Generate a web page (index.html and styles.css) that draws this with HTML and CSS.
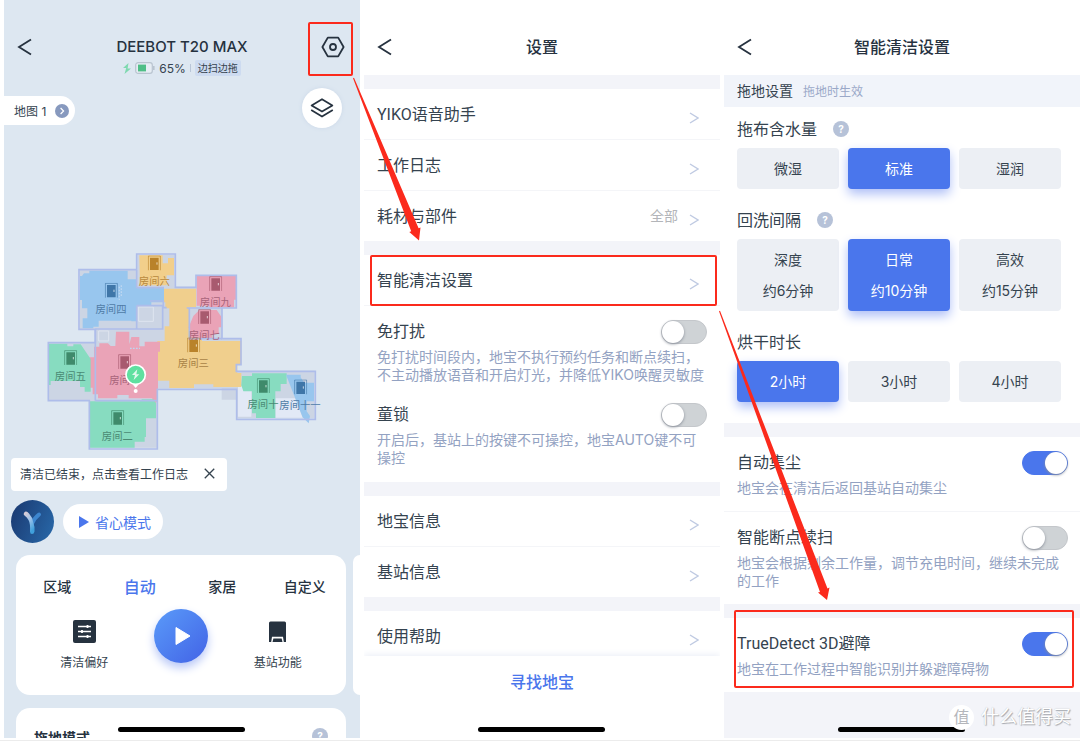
FILE: index.html
```html
<!DOCTYPE html>
<html lang="zh-CN">
<head>
<meta charset="utf-8">
<meta name="viewport" content="width=device-width, initial-scale=1">
<title>DEEBOT T20 MAX</title>
<link rel="stylesheet" href="styles.css">
</head>
<body>
<svg class="defs" aria-hidden="true">
  <symbol id="back" viewBox="0 0 16 18"><path d="M14 1.5 2 9l12 7.5" fill="none" stroke="currentColor" stroke-width="1.8"/></symbol>
  <symbol id="chevron" viewBox="0 0 10 12"><path d="M1 1l8 5-8 5" fill="none" stroke="currentColor" stroke-width="1.4"/></symbol>
  <symbol id="door" viewBox="0 0 40 46"><path d="M2 45V2h36v43" fill="none" stroke="currentColor" stroke-width="3" opacity=".65"/><path d="M7 7h26v37H7z" fill="currentColor"/><path d="M28 21v7" stroke="#fff" stroke-width="3" opacity=".7"/></symbol>
</svg>
<div class="stage">

  <section class="panel home">
    <header class="header">
      <button class="icon-btn" aria-label="返回"><svg class="back"><use href="#back"/></svg></button>
      <h1 class="title">DEEBOT T20 MAX</h1>
      <button class="icon-btn gear marked" aria-label="设置">
        <svg class="gear-icon" viewBox="0 0 24 22" fill="none" stroke="currentColor" stroke-width="1.8" stroke-linejoin="round"><path d="M6.8 1.6h10.4L22.6 11l-5.4 9.4H6.8L1.4 11z"/><circle cx="12" cy="11" r="3"/></svg>
      </button>
    </header>
    <div class="status">
      <svg class="bolt" viewBox="0 0 8 11"><path d="M5.5 0 0 5h3.2L1.5 11 8 5.4H4.6z" fill="#7fd9b0"/></svg>
      <svg class="battery" viewBox="0 0 20 12"><rect x=".7" y=".7" width="16.6" height="10.6" rx="2.4" fill="#e6edf4" stroke="#b9c4d0" stroke-width="1.2"/><rect x="3" y="2.6" width="8" height="6.8" fill="#4fbe87"/><path d="M18.8 4v4" stroke="#b9c4d0" stroke-width="1.6"/></svg>
      <span class="percent">65%</span>
      <i class="sep"></i>
      <span class="mode-tag">边扫边拖</span>
    </div>
    <div class="map-tools">
      <button class="map-chip">地图 1
        <svg class="chip-arrow" viewBox="0 0 14 14"><circle cx="7" cy="7" r="7" fill="#8799be"/><path d="M5.6 4 8.6 7l-3 3" fill="none" stroke="#fff" stroke-width="1.2"/></svg>
      </button>
      <button class="layers" aria-label="图层">
        <svg class="layers-icon" viewBox="0 0 24 20" fill="none" stroke="currentColor" stroke-width="1.7" stroke-linejoin="round"><path d="M12 1.2 22.4 7.400 12 13.600 1.600 7.400z"/><path d="M1.200 12 12 18.600 22.800 12"/></svg>
      </button>
    </div>
    <svg class="map" viewBox="4 128 356 330" role="img" aria-label="房间地图">
      <g transform="translate(30 240) scale(.33333)">
        <g fill="#ccd5e4">
          <path d="M150 90h172v-46h112v96h66v-33h118v96h-42v93h56v76h-14v20h236v142H620v-55h-45v-34H382v178H180V482H56V309h140v-42h-46z"/>
        </g>
        <path d="M624 438h40v92h-40zM736 475h60l22 58h-82z" fill="#e2e9f6"/>
        <path d="M328 46h70v24h16v-16h18v52h-22v30h-80z" fill="#f2cf8b"/>
        <path d="M162 100h16v-8h115v26h27v25h80l8 12-4 32h-40v10h-44v47h-16v-2h-98v18h-16v5h-32v-30h14v-30h-16v-25h-6v-72h6z" fill="#98c6ee"/>
        <path d="M402 146h96v56h-20v96h38v5h118v70h-12v26h12v42h-84v-8h-58v11H418v-22h-36V303h22v-44h14v-54h-12v-18h-4z" fill="#f0cf8d"/>
        <path d="M500 107h118v72h-6v23h-74v-5h-38z" fill="#eaa3b7"/>
        <path d="M490 228l18-18h52l14 20v32h-8v20h-20v14h-66v-32h-5z" fill="#eaa3b7"/>
        <path d="M258 275h40v38l6-22h24v28h16v-14h46v30h-6v145l-8 10-10-15h-70v-10h-34v10h-58v-12h-16v-20h-10V352h14v-32h16v-10h26l8 8h14z" fill="#eaa3b7"/>
        <path d="M56 311h56v8h18v-6h22l30 44v98h-18v-14h-14v-18H62v12h-6z" fill="#87dcc0"/>
        <path d="M180 484h150l6-6h34l8 12v45h-30v56h-4v14h-30v18H180z" fill="#87dcc0"/>
        <path d="M636 408h30v-8h104v32h-18v22h-16v80h-58v-14h-12v-66h-26l-6-18z" fill="#87dcc0"/>
        <path d="M768 404h44v8l10 16h30v56h-22v30l10 14-4 22-18-18z" fill="#98c6ee"/>
        <path d="M326 201h44v43h-44zM206 273h30v30h-30z" fill="none" stroke="#dfe5ef" stroke-width="3"/>
        <path d="M268 140v40M274 136v36M300 325h30" stroke="#bcd6f1" stroke-width="4" stroke-dasharray="5 4"/>
        <g fill="none" stroke="#aebdea" stroke-width="5">
          <path d="M320 143V42h116v100h62v-36h121v98H470m106 0v92h57v78h-14v20h237v144H620V448H382v179H178V482H55V308h141v-40h-49V89h171"/>
          <path d="M196 268v214m0 0H382m-62-339h82m-82 54h78v70H196m124 0v-70M478 204v92h98M360 183h40v20h10"/>
        </g>
        <g class="doors">
          <use href="#door" x="353" y="46" width="40" height="46" color="#b9822a"/>
          <use href="#door" x="224" y="128" width="40" height="46" color="#3f76a8"/>
          <use href="#door" x="537" y="108" width="40" height="46" color="#a85a6f"/>
          <use href="#door" x="504" y="207" width="40" height="46" color="#a85a6f"/>
          <use href="#door" x="471" y="292" width="40" height="46" color="#b9822a"/>
          <use href="#door" x="264" y="342" width="40" height="46" color="#a85a6f"/>
          <use href="#door" x="102" y="330" width="40" height="46" color="#3f8a6b"/>
          <use href="#door" x="243" y="510" width="40" height="46" color="#3f8a6b"/>
          <use href="#door" x="680" y="414" width="40" height="46" color="#3f8a6b"/>
          <use href="#door" x="792" y="418" width="40" height="46" color="#3f76a8"/>
        </g>
        <g class="room-names">
          <text x="373" y="136" fill="#b98a3e">房间六</text>
          <text x="243" y="218" fill="#4f7ba6">房间四</text>
          <text x="556" y="197" fill="#a8647a">房间九</text>
          <text x="523" y="296" fill="#a8647a">房间七</text>
          <text x="490" y="381" fill="#a88346">房间三</text>
          <text x="284" y="431" fill="#a8647a">房间一</text>
          <text x="121" y="419" fill="#4a8a74">房间五</text>
          <text x="262" y="599" fill="#4a8a74">房间二</text>
          <text x="699" y="503" fill="#4a8a74">房间十</text>
          <text x="810" y="507" fill="#4f7ba6">房间十一</text>
        </g>
        <path d="M304 428h26l-13 16z" fill="#fff"/>
        <circle cx="317" cy="404" r="29" fill="#5fe0a0" stroke="#fff" stroke-width="5"/>
        <path d="M322 388l-16 17h9l-4 15 17-17h-9z" fill="#fff" opacity=".8"/>
        <circle cx="317" cy="453" r="6" fill="#fff"/>
      </g>
    </svg>
    <div class="toast"><span>清洁已结束，点击查看工作日志</span>
      <button class="icon-btn" aria-label="关闭"><svg class="close" viewBox="0 0 10 10"><path d="M.7.7l8.600 8.600M9.300.7.7 9.300" stroke="currentColor" stroke-width="1.200"/></svg></button>
    </div>
    <div class="assist">
      <button class="yiko" aria-label="YIKO">
        <svg class="yiko-logo" viewBox="0 0 43 43">
          <defs>
            <linearGradient id="yb" x1="0" x2="1" y1=".3" y2=".7"><stop offset="0" stop-color="#1b3c74"/><stop offset="1" stop-color="#2765a5"/></linearGradient>
            <linearGradient id="yl" x1="0" x2=".5" y1="0" y2="1"><stop offset="0" stop-color="#e9cfd0"/><stop offset=".5" stop-color="#9fc3ea"/><stop offset="1" stop-color="#3fa0dc"/></linearGradient>
          </defs>
          <circle cx="21.500" cy="21.500" r="21.500" fill="url(#yb)"/>
          <path d="M28 14.500q-5 4-7 9" fill="none" stroke="#3d86cf" stroke-width="4" stroke-linecap="round"/>
          <path d="M13 13q2-3 5 .5 3.500 4 4 8 2 5 1.500 10-.5 2.500-2.500 2.500t-2-2.500q.5-8-1.500-11.500-1.500-3-4-4.500-1.500-1.200-.5-2.500z" fill="url(#yl)"/>
        </svg>
      </button>
      <button class="easy"><svg class="easy-play" viewBox="0 0 10 12"><path d="M0 0l10 6-10 6z" fill="currentColor"/></svg>省心模式</button>
    </div>
    <div class="cards">
      <article class="card">
        <nav class="tabs">
          <a href="#area">区域</a><a href="#auto" class="active">自动</a><a href="#furniture">家居</a><a href="#custom">自定义</a>
        </nav>
        <div class="actions">
          <button class="action">
            <svg class="action-icon" viewBox="0 0 23 23"><rect width="23" height="23" rx="2" fill="#26323f"/><path d="M5 6.500h13M5 11.500h13M5 16.500h13" stroke="#fff" stroke-width="1.300"/><path d="M14.500 5v3M9 10v3M14.500 15v3" stroke="#fff" stroke-width="1.800"/></svg>
            清洁偏好
          </button>
          <button class="play" aria-label="开始"><svg class="play-icon" viewBox="0 0 16 20"><path d="M1 1.500v17L15 10z" fill="#fff" stroke="#fff" stroke-linejoin="round"/></svg></button>
          <button class="action">
            <svg class="action-icon" viewBox="0 0 23 23"><path d="M3 3q0-1.500 1.500-1.500h14Q20 1.500 20 3v19h-2.200l-.8-5.200H6L5.200 22H3z" fill="#26323f"/><path d="M7.400 18.500h8.200l.9 3.500h-10z" fill="#26323f"/></svg>
            基站功能
          </button>
        </div>
      </article>
      <div class="card peek"></div>
    </div>
    <article class="card mop"><h2>拖地模式</h2><span class="help">?</span></article>
    <i class="home-bar"></i>
  </section>

  <section class="panel">
    <header class="header">
      <button class="icon-btn" aria-label="返回"><svg class="back"><use href="#back"/></svg></button>
      <h1 class="title">设置</h1>
    </header>
    <div class="scroll">
      <ul class="list">
        <li><a class="row" href="#yiko">YIKO语音助手<svg class="chevron"><use href="#chevron"/></svg></a></li>
        <li><a class="row" href="#log">工作日志<svg class="chevron"><use href="#chevron"/></svg></a></li>
        <li><a class="row" href="#parts">耗材与部件<span class="value">全部</span><svg class="chevron"><use href="#chevron"/></svg></a></li>
      </ul>
      <ul class="list">
        <li class="marked"><a class="row" href="#clean">智能清洁设置<svg class="chevron"><use href="#chevron"/></svg></a></li>
        <li class="toggles">
          <div class="toggle">
            <label for="dnd">免打扰</label><input class="switch" type="checkbox" id="dnd">
            <p>免打扰时间段内，地宝不执行预约任务和断点续扫，不主动播放语音和开启灯光，并降低YIKO唤醒灵敏度</p>
          </div>
          <div class="toggle">
            <label for="lock">童锁</label><input class="switch" type="checkbox" id="lock">
            <p>开启后，基站上的按键不可操控，地宝AUTO键不可操控</p>
          </div>
        </li>
      </ul>
      <ul class="list">
        <li><a class="row" href="#bot">地宝信息<svg class="chevron"><use href="#chevron"/></svg></a></li>
        <li><a class="row" href="#station">基站信息<svg class="chevron"><use href="#chevron"/></svg></a></li>
      </ul>
      <ul class="list">
        <li><a class="row" href="#help">使用帮助<svg class="chevron"><use href="#chevron"/></svg></a></li>
      </ul>
    </div>
    <footer class="find"><button>寻找地宝</button></footer>
    <i class="home-bar"></i>
  </section>

  <section class="panel clean">
    <header class="header">
      <button class="icon-btn" aria-label="返回"><svg class="back"><use href="#back"/></svg></button>
      <h1 class="title">智能清洁设置</h1>
    </header>
    <div class="section-head"><h2>拖地设置</h2><small>拖地时生效</small></div>
    <div class="options">
      <h3>拖布含水量<span class="help">?</span></h3>
      <div class="choices"><button>微湿</button><button class="on">标准</button><button>湿润</button></div>
      <h3>回洗间隔<span class="help">?</span></h3>
      <div class="choices tall"><button>深度<br>约6分钟</button><button class="on">日常<br>约10分钟</button><button>高效<br>约15分钟</button></div>
      <h3>烘干时长</h3>
      <div class="choices"><button class="on">2小时</button><button>3小时</button><button>4小时</button></div>
    </div>
    <ul class="list">
      <li class="toggle"><label for="dust">自动集尘</label><input class="switch" type="checkbox" id="dust" checked><p>地宝会在清洁后返回基站自动集尘</p></li>
      <li class="toggle"><label for="resume">智能断点续扫</label><input class="switch" type="checkbox" id="resume"><p>地宝会根据剩余工作量，调节充电时间，继续未完成的工作</p></li>
    </ul>
    <ul class="list">
      <li class="toggle marked"><label for="detect">TrueDetect 3D避障</label><input class="switch" type="checkbox" id="detect" checked><p>地宝在工作过程中智能识别并躲避障碍物</p></li>
    </ul>
    <i class="home-bar"></i>
    <div class="watermark"><b>值</b>什么值得买</div>
  </section>

  <svg class="arrows" viewBox="0 0 1080 741" aria-hidden="true">
    <path d="M353 78.200 411.200 231.300 409.300 232 419 240.500 420.500 227.500 418.600 228.300 354 77.800z"/>
    <path d="M719 311.200 820 592 818 592.500 827 600 829.500 587.500 827.500 588.500 720 310.800z"/>
  </svg>
</div>
</body>
</html>
```
FILE: styles.css
```css
* { box-sizing: border-box; margin: 0; padding: 0; }
body { font-family: Inter, "Noto Sans CJK SC", sans-serif; color: #35434f; background: #fff; }
button { font: inherit; color: inherit; background: none; border: 0; }
a { color: inherit; text-decoration: none; }
ul { list-style: none; }
svg { display: block; flex: none; }
.defs { position: absolute; width: 0; height: 0; }

.stage { position: relative; display: grid; grid-template-columns: repeat(3, 1fr); gap: 4px; height: 100vh; padding: 0 0 2px 4px; border-bottom: 1px solid #ececec; }
.panel { position: relative; display: flex; flex-direction: column; min-width: 0; min-height: 0; overflow: hidden; }
.panel > * { flex-shrink: 0; }
.home { background: #dde7f1; }
.clean { background: #f3f4f9; }

.header { display: grid; grid-template-columns: 40px 1fr 40px; align-items: center; height: 75px; padding: 19px 13px 0; background: #fff; color: #26323f; }
.home .header { height: 60px; padding-top: 34px; background: none; }
.title { font-size: 16px; font-weight: 500; line-height: 24px; text-align: center; }
.home .title { font-size: 15px; }
.icon-btn { display: flex; align-items: center; }
.back { width: 16px; height: 18px; }
.gear { justify-content: flex-end; padding-right: 2px; }
.gear-icon { width: 24px; height: 22px; }

.marked { position: relative; }
.marked::after { content: ""; position: absolute; border: 2px solid #fb2a1c; border-radius: 2px; pointer-events: none; }
.gear.marked::after { inset: -14px -6px -18px 1px; }
.list > .marked::after { inset: 0 3px -1px 6px; }
.clean .list > .marked::after { inset: -8px 6px 4px 10px; }

.status { display: flex; align-items: center; justify-content: center; gap: 4px; height: 16px; font-size: 12px; }
.bolt { width: 8px; height: 11px; }
.battery { width: 20px; height: 12px; }
.sep { width: 1px; height: 8px; background: #b9c6d8; }
.mode-tag { padding: 0 3px; font-size: 10px; line-height: 16px; background: #cddbf0; border-radius: 2px; }

.map-tools { display: flex; justify-content: space-between; align-items: flex-start; padding: 12px 18px 0 0; }
.map-chip { display: flex; align-items: center; gap: 9px; height: 29px; margin-top: 8px; padding: 0 6px 0 10px; font-size: 12px; background: #fff; border-radius: 0 15px 15px 0; }
.chip-arrow { width: 14px; height: 14px; }
.layers { display: grid; place-items: center; width: 40px; height: 40px; color: #26323f; background: #fff; border-radius: 50%; box-shadow: 0 0 4px #cbd8e8; }
.layers-icon { width: 24px; height: 20px; }
.map { width: 100%; }
.room-names { font-size: 31px; text-anchor: middle; }

.toast { display: flex; align-items: center; align-self: flex-start; gap: 16px; height: 33px; margin-left: 7px; padding: 0 12px 2px 9px; font-size: 12px; background: #fff; border-radius: 4px; }
.close { width: 11px; height: 11px; }
.assist { display: flex; align-items: center; gap: 9px; padding: 9px 7px 12px; }
.yiko-logo { width: 43px; height: 43px; }
.easy { display: flex; align-items: center; gap: 6px; height: 35px; padding: 0 12px 0 16px; font-size: 14px; color: #4a76ec; background: #fff; border-radius: 18px; }
.easy-play { width: 10px; height: 12px; }

.cards { display: grid; grid-template-columns: 1fr 7px; gap: 7px; padding-left: 12px; }
.card { background: #fff; border-radius: 14px; }
.card.peek { border-radius: 7px 0 0 7px; }
.cards .card:first-child { height: 140px; padding-top: 16px; }
.tabs { display: grid; grid-template-columns: repeat(4, 1fr); align-items: center; height: 30px; font-size: 14px; font-weight: 500; text-align: center; color: #26323f; }
.tabs .active { font-size: 16px; color: #4a76ec; }
.actions { display: grid; grid-template-columns: repeat(3, 1fr); justify-items: center; padding: 8px 20px 0; }
.action { display: flex; flex-direction: column; align-items: center; gap: 12px; padding-top: 11px; font-size: 12px; line-height: 16px; }
.action-icon { width: 23px; height: 23px; }
.play { display: grid; place-items: center; width: 54px; height: 54px; padding-left: 4px; background: linear-gradient(135deg, #5a9bf9, #4263e6); border-radius: 50%; box-shadow: 0 5px 10px #b9c8f7; }
.play-icon { width: 16px; height: 20px; }
.mop { display: flex; justify-content: space-between; align-items: flex-start; margin: 13px 14px 0 12px; padding: 20px 18px; }
.mop h2 { font-size: 14px; font-weight: 700; line-height: 20px; color: #26323f; }
.help { display: grid; place-items: center; width: 16px; height: 16px; font-size: 10px; font-weight: 700; line-height: 16px; color: #fff; background: #b6c2d8; border-radius: 50%; }
.home-bar { position: absolute; bottom: 6px; left: 50%; width: 127px; height: 5px; margin-left: -64px; background: #000; border-radius: 3px; }

.scroll { flex: 1 1 0; min-height: 0; overflow: hidden; }
.list { border-top: 14px solid #f3f4f9; background: #fff; }
.list > li + li { border-top: 1px solid #f4f5f8; }
.row { display: flex; align-items: center; height: 50px; padding: 0 21px 2px 13px; font-size: 16px; }
.row, .toggle label { font-family: Roboto, "Noto Sans CJK SC", sans-serif; }
.chevron { width: 10px; height: 12px; margin: 10px 0 0 auto; color: #bfcae2; }
.value { margin-left: auto; font-size: 14px; color: #b3b5b9; }
.value + .chevron { margin-left: 11px; }
.toggles { padding-bottom: 10px; }
.toggle { display: grid; grid-template-columns: 1fr 46px; row-gap: 4px; padding: 14px 13px 5px; }
.clean .toggle { padding: 14px 12px 14px 13px; }
.toggle label { font-size: 16px; line-height: 24px; }
.toggle p { grid-column: 1 / -1; font-size: 14px; line-height: 18px; color: #93a2c2; }
.switch { appearance: none; width: 46px; height: 24px; padding: 1px; background: #cfd3d6; border: 1px solid #c4c7cb; border-radius: 12px; }
.switch::before { content: ""; display: block; width: 22px; height: 22px; margin: -1px; background: #fff; border-radius: 50%; box-shadow: 0 1px 3px #888e99; }
.switch:checked { background: #4a76ec; border-color: #4a76ec; }
.switch:checked::before { margin-left: 21px; }
.find { height: 82px; padding-top: 14px; text-align: center; background: #fff; box-shadow: 0 -2px 6px #eef1f8; }
.find button { font-size: 16px; font-weight: 500; line-height: 24px; color: #4a76ec; }

.section-head { display: flex; align-items: center; gap: 10px; height: 32px; padding: 0 13px 2px; background: #f1f4fa; }
.section-head h2 { font-size: 14px; font-weight: 400; }
.section-head small { font-size: 12px; color: #9aa8c8; }
.options { padding: 11px 19px 21px 13px; background: #fff; }
.options h3 { display: flex; align-items: center; gap: 16px; margin-bottom: 8px; font-size: 16px; font-weight: 400; line-height: 22px; }
.choices { display: grid; grid-template-columns: repeat(3, 1fr); gap: 9px; }
.choices + h3 { margin-top: 20px; }
.choices button { height: 41px; padding-bottom: 2px; font-size: 14px; background: #eceff4; border-radius: 4px; }
.choices.tall button { height: 72px; padding-bottom: 0; line-height: 31px; }
.choices .on { color: #fff; background: #4a76ec; box-shadow: 0 5px 11px #aebff7; }

.watermark { position: absolute; right: 9px; bottom: 8px; display: flex; align-items: center; gap: 7px; font-size: 18px; line-height: 26px; color: #fff; text-shadow: 1px 1px 1px #a5a8ae, 0 0 1px #b5b8be; }
.watermark b { width: 25px; height: 25px; font-size: 16px; font-weight: 400; line-height: 24px; text-align: center; color: #b4b6bb; text-shadow: none; background: #fff; border-radius: 50%; }
.arrows { position: absolute; top: 0; left: 0; width: 100%; fill: #fb2a1c; pointer-events: none; }
```
